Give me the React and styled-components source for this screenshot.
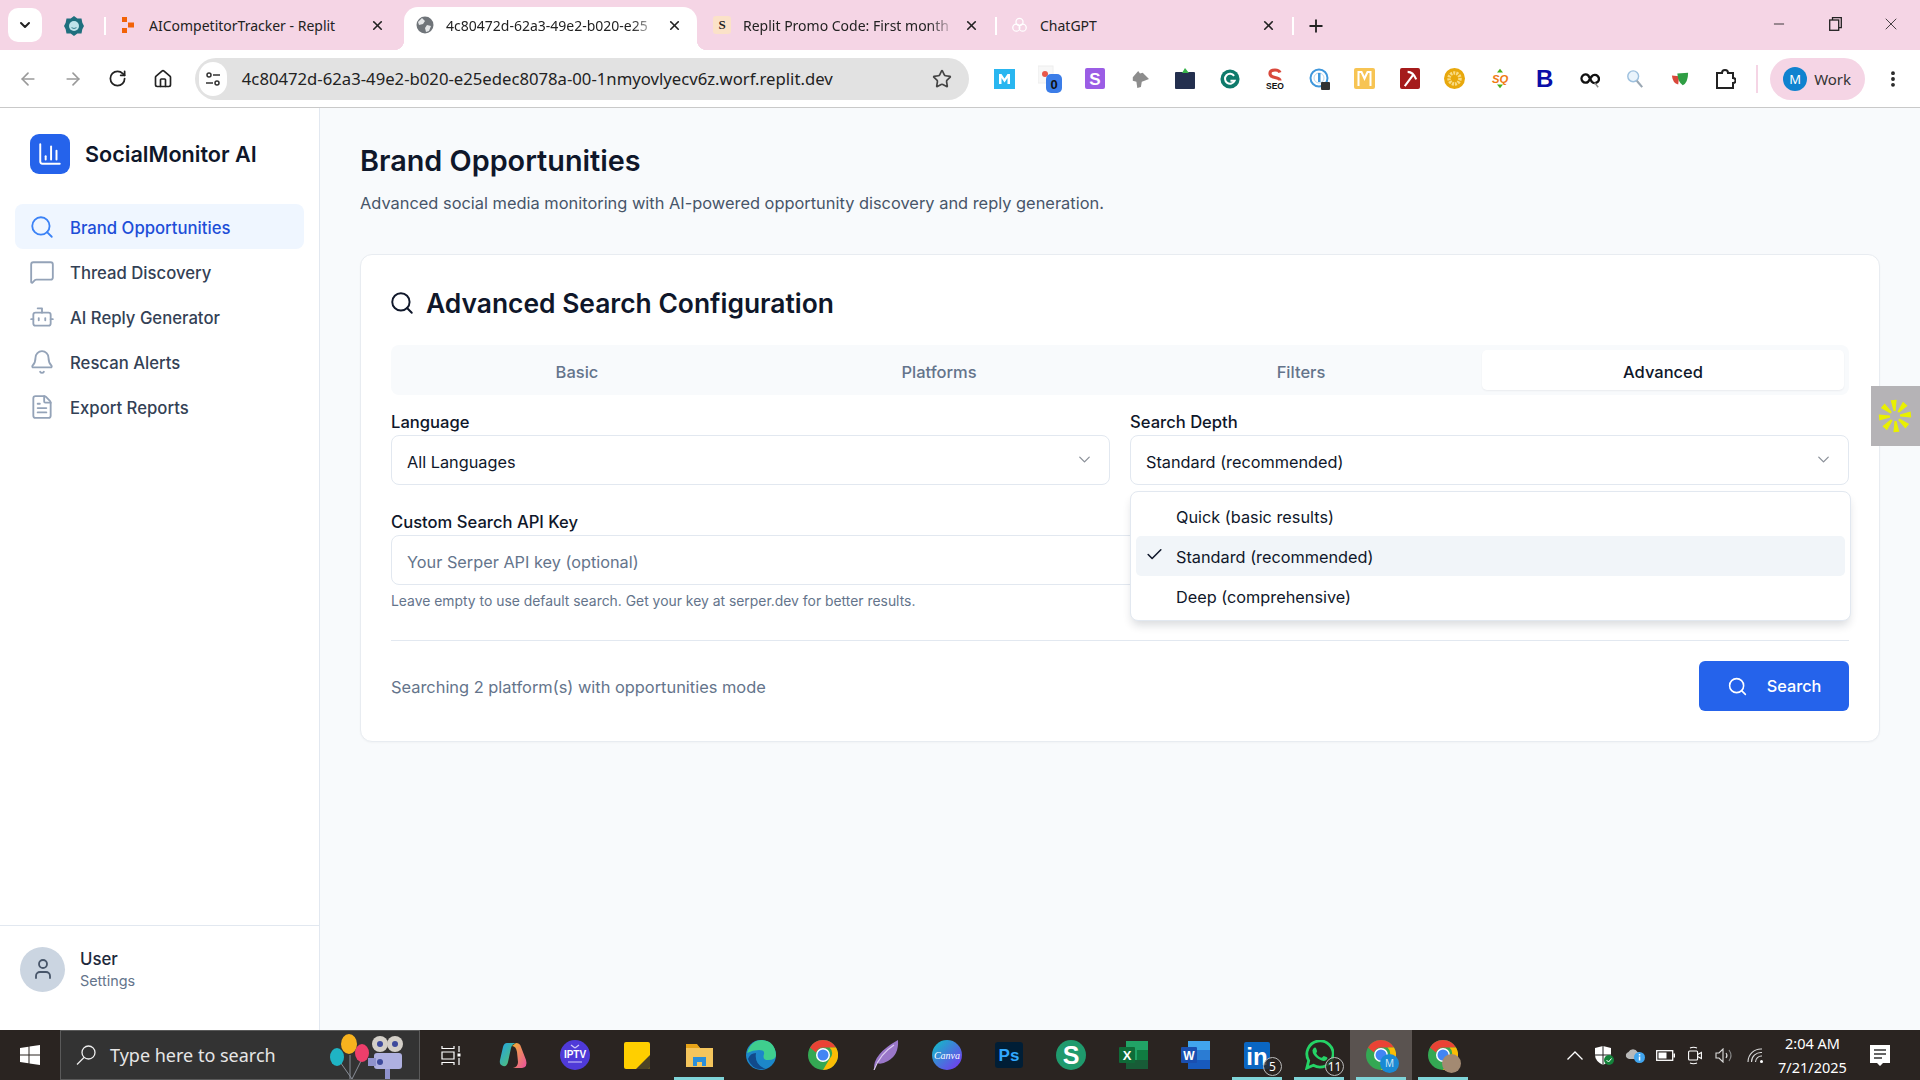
import React from 'react'
import styled, { createGlobalStyle } from 'styled-components'
import {
  ArrowLeft, ArrowRight, Bell, Bot, ChartColumn, Check, ChevronDown, FileText, Home, MessageSquare,
  Minus, MoreVertical, Plus, RotateCw, Search, Star, User, X,
} from 'lucide-react'

const GlobalStyle = createGlobalStyle`
  html, body { margin: 0; padding: 0; height: 100%; overflow: hidden; }
  body { font-family: Inter, "Liberation Sans", sans-serif; color: #0f172a; background: #fff; }
  * { box-sizing: border-box; }
`

const navItems = [
  { label: 'Brand Opportunities', Icon: Search, active: true },
  { label: 'Thread Discovery', Icon: MessageSquare },
  { label: 'AI Reply Generator', Icon: Bot },
  { label: 'Rescan Alerts', Icon: Bell },
  { label: 'Export Reports', Icon: FileText },
]

const ReplitFavicon = () => (
  <svg width="14" height="16" viewBox="0 0 14 16">
    <path d="M1 0h5v5H1zM7 5.500h6v5H7zM1 11h5v5H1z" fill="#f26207" />
  </svg>
)

const GlobeFavicon = () => (
  <svg width="18" height="18" viewBox="0 0 18 18">
    <circle cx="9" cy="9" r="8.500" fill="#6f7479" />
    <path d="M6 2l3 3-2 3-4 1-1-3zM11 9l4 1-2 5-3 1-1-4z" fill="#e4e6e8" />
  </svg>
)

const GptFavicon = () => (
  <svg width="17" height="17" viewBox="0 0 24 24" fill="none" stroke="#fff" strokeWidth="1.800">
    <circle cx="12" cy="7" r="5" />
    <circle cx="7.500" cy="15" r="5" />
    <circle cx="16.500" cy="15" r="5" />
  </svg>
)

const PinnedIcon = () => (
  <svg width="20" height="20" viewBox="0 0 24 24">
    <path d="M12 0l4 3h5l1 5 2 4-2 4-1 5h-5l-4 3-4-3H3l-1-5-2-4 2-4 1-5h5z" fill="#1f6f7e" />
    <circle cx="12" cy="12" r="6" fill="#bfe3ea" />
    <path d="M9 14q3 2 6 0" stroke="#1f6f7e" fill="none" />
  </svg>
)

const PuzzleIcon = () => (
  <svg width="22" height="22" viewBox="0 0 22 22" fill="none" stroke="#222" strokeWidth="2">
    <path d="M3 5h5a3 3 0 0 1 6 0h5v5a2.500 2.500 0 0 1 0 5v5H3z" />
  </svg>
)

const BoldExtension = () => <ExtLetter>B</ExtLetter>

const extensions = [
  <svg key="m" width="21" height="20" viewBox="0 0 21 20"><rect width="21" height="20" fill="#29b6f0" /><path d="M5 15V5h2.500L10.500 9.500 13.500 5H16v10h-2.500V9l-3 4.500L7.500 9v6z" fill="#fff" /></svg>,
  <svg key="b" width="24" height="28" viewBox="0 0 24 28"><rect x="0" y="1" width="15" height="17" fill="#f7f7f7" stroke="#eee" /><circle cx="7" cy="9" r="3" fill="#e8574a" /><rect x="8" y="9" width="16" height="19" rx="5" fill="#3b7de8" /><text x="16" y="24" fontSize="13" fontWeight="700" textAnchor="middle" fill="#111" fontFamily="Liberation Sans">0</text></svg>,
  <svg key="s" width="20" height="21" viewBox="0 0 20 21"><rect width="20" height="21" rx="2" fill="#9b5de5" /><text x="10" y="16.500" fontSize="17" fontWeight="700" textAnchor="middle" fill="#fff" fontFamily="Liberation Sans">S</text></svg>,
  <svg key="w" width="20" height="18" viewBox="0 0 22 20"><path d="M3 8l6-7 2 3 3-1 7 7-5 2-3 1-1 6-4 1-1-7-4-1z" fill="#8d8d8d" /></svg>,
  <svg key="f" width="20" height="21" viewBox="0 0 20 21"><rect x="0" y="4" width="20" height="17" rx="1" fill="#232f4e" /><path d="M7 5l3-5 4 5z" fill="#38b34a" /></svg>,
  <svg key="g" width="20" height="20" viewBox="0 0 22 22"><circle cx="11" cy="11" r="10.500" fill="#0e7a6b" /><path d="M15.500 7.500A5.500 5.500 0 1 0 16 13h-4.500" stroke="#fff" strokeWidth="2.200" fill="none" /></svg>,
  <svg key="seo" width="20" height="22" viewBox="0 0 20 22"><path d="M15 4.500Q14 2 10 2 5 2 5 5.500q0 3 5 4 5 1 5 3" fill="none" stroke="#d9483b" strokeWidth="3.200" /><text x="10" y="21" fontSize="8.500" fontWeight="700" textAnchor="middle" fill="#111" fontFamily="Liberation Sans">SEO</text></svg>,
  <svg key="lock" width="22" height="22" viewBox="0 0 22 22"><circle cx="10" cy="10" r="8.500" fill="none" stroke="#3f97dc" strokeWidth="2" /><circle cx="10" cy="10" r="5" fill="#fff" stroke="#b9d7ee" /><rect x="9" y="5" width="2.500" height="9" fill="#3f97dc" /><rect x="12" y="14" width="9" height="8" rx="1" fill="#333" /></svg>,
  <svg key="my" width="21" height="21" viewBox="0 0 21 21"><rect width="21" height="21" rx="2" fill="#f7c453" /><path d="M4.500 18V4h3l3 6.500L13.500 4h3v14" fill="none" stroke="#fff" strokeWidth="2" /></svg>,
  <svg key="pick" width="20" height="21" viewBox="0 0 21 22"><rect width="21" height="22" rx="2" fill="#a51b1b" /><path d="M5 19L14 7M8 4q6 0 9 8" stroke="#fff" strokeWidth="2.200" fill="none" /></svg>,
  <svg key="coin" width="21" height="21" viewBox="0 0 21 21"><circle cx="10.500" cy="10.500" r="10.500" fill="#e8a80c" /><circle cx="10.500" cy="10.500" r="5.500" fill="none" stroke="#f9dc84" strokeWidth="3.500" strokeDasharray="2 1" /></svg>,
  <svg key="sq" width="20" height="21" viewBox="0 0 20 28"><path d="M6 6l4-5 4 5zM6 22l4 5 4-5z" fill="#4caf1f" /><text x="10" y="20" fontSize="15" fontWeight="700" fontStyle="italic" textAnchor="middle" fill="#f07a12" fontFamily="Liberation Sans">SQ</text></svg>,
  <BoldExtension key="bold" />,
  <svg key="inf" width="20" height="20" viewBox="0 0 22 22"><path d="M9 7a4.500 4.500 0 1 0 0 7L13 8a4.500 4.500 0 1 1 0 6z" fill="none" stroke="#111" strokeWidth="2.600" /><path d="M16 15l4 5" stroke="#888" strokeWidth="1.600" /></svg>,
  <svg key="mag" width="18" height="20" viewBox="0 0 20 22"><circle cx="8" cy="8" r="6" fill="#eaf4fc" stroke="#9dc0de" strokeWidth="1.600" /><path d="M12 13l6 7" stroke="#9aa7b3" strokeWidth="2.400" /></svg>,
  <svg key="mask" width="18" height="18" viewBox="0 0 20 20"><path d="M1 6l8 1-1 9q-6-1-7-10z" fill="#d9483b" /><path d="M7 4l12-1q0 11-6 14-5-3-6-13z" fill="#2f9e44" /></svg>,
]

const ChromeLogo = () => (
  <svg width="30" height="30" viewBox="0 0 30 30">
    <circle cx="15" cy="15" r="15" fill="#34a853" />
    <path d="M15 0a15 15 0 0 1 13 7.500H15a7.500 7.500 0 0 0-7 5L2 7.500A15 15 0 0 1 15 0z" fill="#ea4335" />
    <path d="M28 7.500A15 15 0 0 1 15 30l6.500-11a7.500 7.500 0 0 0 0-11.500z" fill="#fbbc05" />
    <circle cx="15" cy="15" r="7" fill="#fff" />
    <circle cx="15" cy="15" r="5.500" fill="#4285f4" />
  </svg>
)

const BadgedChrome = ({ color, label }) => (
  <BadgeWrap>
    <ChromeLogo />
    <ProfileDot $color={color}>{label}</ProfileDot>
  </BadgeWrap>
)

const taskApps = [
  { key: 'copilot', icon: <svg width="29" height="25" viewBox="0 0 29 25"><defs><linearGradient id="cpa" x1="0" y1="0" x2="1" y2="1"><stop offset="0" stopColor="#1fa4e8" /><stop offset="1" stopColor="#5fc65a" /></linearGradient><linearGradient id="cpb" x1="0" y1="0" x2="1" y2="1"><stop offset="0" stopColor="#f2b632" /><stop offset="1" stopColor="#e94f9e" /></linearGradient></defs><path d="M8 0h9q-4 1-5 5L9 19q-1 5-5 4-4-1-3-6L4 4q1-4 4-4z" fill="url(#cpa)" /><path d="M17 0q4 0 5 4l5 13q2 7-4 8h-9q5-1 5-6l-1-10q-1-6-5-6z" fill="url(#cpb)" /></svg> },
  { key: 'iptv', icon: <svg width="30" height="30" viewBox="0 0 30 30"><circle cx="15" cy="15" r="15" fill="#4f3ad8" /><text x="15" y="18" fontSize="10" fontWeight="700" textAnchor="middle" fill="#fff" fontFamily="Liberation Sans">IPTV</text><path d="M8 22h14M15 8l-4-3M15 8l4-3" stroke="#cfc9f7" strokeWidth="1.200" /></svg> },
  { key: 'notes', icon: <svg width="26" height="27" viewBox="0 0 26 27"><rect width="26" height="27" rx="2" fill="#ffcf00" /><path d="M12 27l14-14v12q0 2-2 2z" fill="#4c4326" /></svg> },
  { key: 'explorer', running: true, icon: <svg width="27" height="23" viewBox="0 0 27 23"><path d="M0 1h11l3 3h13v19H0z" fill="#f4c55c" /><path d="M0 0h11l3 4H0z" fill="#e6a318" /><path d="M7 22V13h13v9h-4v-4h-5v4z" fill="#2a8fd9" /></svg> },
  { key: 'edge', icon: <svg width="30" height="30" viewBox="0 0 30 30"><circle cx="15" cy="15" r="15" fill="#1c87c9" /><path d="M1 13Q5 0 16 0q13 1 14 15 0 5-8 5-6 0-4-6 1-4-5-4T1 13z" fill="#3fcf8e" /><path d="M10 13q-2 12 10 16Q6 31 2 19q2-6 8-6z" fill="#114a8b" /></svg> },
  { key: 'chrome', icon: <ChromeLogo /> },
  { key: 'feather', icon: <svg width="27" height="30" viewBox="0 0 27 30"><path d="M2 29Q1 14 26 0q1 15-10 21-7 4-11 2z" fill="#9a77c9" /><path d="M2 30Q8 14 22 5" stroke="#dccdf0" strokeWidth="1.200" fill="none" /></svg> },
  { key: 'canva', icon: <svg width="30" height="30" viewBox="0 0 30 30"><defs><linearGradient id="cv" x1="0" y1="0" x2="1" y2="1"><stop offset="0" stopColor="#0cc4c4" /><stop offset="1" stopColor="#7b2ff2" /></linearGradient></defs><circle cx="15" cy="15" r="15" fill="url(#cv)" /><text x="15" y="19" fontSize="10" fontStyle="italic" textAnchor="middle" fill="#fff" fontFamily="Liberation Serif">Canva</text></svg> },
  { key: 'ps', icon: <svg width="28" height="26" viewBox="0 0 28 26"><rect width="28" height="26" rx="3" fill="#001e36" /><text x="14" y="19" fontSize="17" fontWeight="700" textAnchor="middle" fill="#31a8ff" fontFamily="Liberation Sans">Ps</text></svg> },
  { key: 'sheets', icon: <svg width="30" height="30" viewBox="0 0 30 30"><circle cx="15" cy="15" r="15" fill="#1f9a6d" /><text x="15" y="24" fontSize="25" fontWeight="700" textAnchor="middle" fill="#fff" fontFamily="Liberation Sans">S</text></svg> },
  { key: 'excel', icon: <svg width="29" height="28" viewBox="0 0 29 28"><rect x="7" y="0" width="22" height="28" fill="#21a366" /><rect x="18" y="9" width="11" height="10" fill="#107c41" /><rect x="7" y="19" width="22" height="9" fill="#185c37" /><rect x="0" y="6" width="16" height="16" rx="1" fill="#0f6b38" /><text x="8" y="18.500" fontSize="13" fontWeight="700" textAnchor="middle" fill="#fff" fontFamily="Liberation Sans">X</text></svg> },
  { key: 'word', icon: <svg width="29" height="28" viewBox="0 0 29 28"><rect x="7" y="0" width="22" height="28" fill="#2b7cd3" /><rect x="7" y="0" width="22" height="9" fill="#41a5ee" /><rect x="7" y="19" width="22" height="9" fill="#185abd" /><rect x="0" y="6" width="16" height="16" rx="1" fill="#1a4fb0" /><text x="8" y="18.500" fontSize="12" fontWeight="700" textAnchor="middle" fill="#fff" fontFamily="Liberation Sans">W</text></svg> },
  { key: 'linkedin', running: true, badge: '5', icon: <svg width="26" height="27" viewBox="0 0 26 27"><rect width="26" height="27" rx="2" fill="#0a66c2" /><text x="13" y="23" fontSize="24" fontWeight="700" textAnchor="middle" fill="#fff" fontFamily="Liberation Sans">in</text></svg> },
  { key: 'whatsapp', running: true, badge: '11', icon: <svg width="30" height="30" viewBox="0 0 32 32"><path d="M3 30l2-8A14 14 0 1 1 10 27z" fill="#2a241f" stroke="#25d366" strokeWidth="3" /><path d="M10 9q2-2 3 0l1 3-1 2q2 4 6 5l2-2 3 1q2 1 0 3-3 3-9-1-6-4-6-9z" fill="#25d366" /></svg> },
  { key: 'chrome-work', running: true, active: true, icon: <BadgedChrome color="#1a8ad4" label="M" /> },
  { key: 'chrome-other', running: true, icon: <BadgedChrome color="#a38a72" /> },
]

const App = () => {
  return (
    <>
      <GlobalStyle />
      <Screen>
        <TabStrip>
          <ScrollPill><ChevronDown size={16} strokeWidth={3} /></ScrollPill>
          <PinnedTab><PinnedIcon /></PinnedTab>
          <Tab $sep>
            <TabIcon><ReplitFavicon /></TabIcon>
            <TabTitle>AICompetitorTracker - Replit</TabTitle>
            <TabClose><X size={15} strokeWidth={2.600} /></TabClose>
          </Tab>
          <Tab $active>
            <TabIcon><GlobeFavicon /></TabIcon>
            <TabTitle $fade>4c80472d-62a3-49e2-b020-e25</TabTitle>
            <TabClose><X size={15} strokeWidth={2.600} /></TabClose>
          </Tab>
          <Tab>
            <TabIcon><SiteBadge>S</SiteBadge></TabIcon>
            <TabTitle $fade>Replit Promo Code: First month</TabTitle>
            <TabClose><X size={15} strokeWidth={2.600} /></TabClose>
          </Tab>
          <Tab $sep $sepRight>
            <TabIcon><GptFavicon /></TabIcon>
            <TabTitle>ChatGPT</TabTitle>
            <TabClose><X size={15} strokeWidth={2.600} /></TabClose>
          </Tab>
          <NewTab><Plus size={20} strokeWidth={2.200} /></NewTab>
          <WindowControls>
            <WindowButton><Minus size={16} strokeWidth={1.300} /></WindowButton>
            <WindowButton>
              <svg width="13" height="14" viewBox="0 0 13 14" fill="none" stroke="#222" strokeWidth="1.300">
                <rect x=".7" y="3" width="9" height="10.300" />
                <path d="M3.500 3V.7h8.800v10h-2.500" />
              </svg>
            </WindowButton>
            <WindowButton><X size={20} strokeWidth={1} /></WindowButton>
          </WindowControls>
        </TabStrip>

        <Toolbar>
          <NavButtons>
            <NavButton $dim><ArrowLeft size={20} /></NavButton>
            <NavButton $dim><ArrowRight size={20} /></NavButton>
            <NavButton><RotateCw size={19} strokeWidth={2.200} /></NavButton>
            <NavButton><Home size={20} /></NavButton>
          </NavButtons>
          <AddressBar>
            <SiteInfo>
              <svg width="16" height="16" viewBox="0 0 16 16" fill="none" stroke="#333" strokeWidth="1.500">
                <circle cx="4" cy="4" r="2" />
                <path d="M8 4h7M1 12h7" />
                <circle cx="12" cy="12" r="2" />
              </svg>
            </SiteInfo>
            <UrlText>4c80472d-62a3-49e2-b020-e25edec8078a-00-1nmyovlyecv6z.worf.replit.dev</UrlText>
            <Star size={20} color="#444" />
          </AddressBar>
          <Extensions>
            {extensions.map((icon) => <ExtSlot key={icon.key}>{icon}</ExtSlot>)}
            <ExtSlot><PuzzleIcon /></ExtSlot>
          </Extensions>
          <ToolbarSep />
          <ProfileChip>
            <ProfileAvatar>M</ProfileAvatar>
            Work
          </ProfileChip>
          <MenuDots><MoreVertical size={20} strokeWidth={2.600} /></MenuDots>
        </Toolbar>

        <Body>
          <Sidebar>
            <Brand>
              <BrandLogo><ChartColumn size={26} color="#fff" strokeWidth={1.800} /></BrandLogo>
              <BrandName>SocialMonitor AI</BrandName>
            </Brand>
            <Nav>
              {navItems.map(({ label, Icon, active }) => (
                <NavItem key={label} $active={active}>
                  <Icon size={26} strokeWidth={1.700} />
                  {label}
                </NavItem>
              ))}
            </Nav>
            <UserRow>
              <Avatar><User size={24} strokeWidth={1.800} /></Avatar>
              <div>
                <UserName>User</UserName>
                <UserLink>Settings</UserLink>
              </div>
            </UserRow>
          </Sidebar>

          <Main>
            <PageTitle>Brand Opportunities</PageTitle>
            <PageSub>Advanced social media monitoring with AI-powered opportunity discovery and reply generation.</PageSub>
            <Card>
              <CardTitle>
                <Search size={26} strokeWidth={1.800} />
                Advanced Search Configuration
              </CardTitle>
              <TabsList>
                <TabTrigger>Basic</TabTrigger>
                <TabTrigger>Platforms</TabTrigger>
                <TabTrigger>Filters</TabTrigger>
                <TabTrigger $active>Advanced</TabTrigger>
              </TabsList>
              <FormGrid>
                <Field>
                  <Label>Language</Label>
                  <SelectBox>
                    All Languages
                    <ChevronDown size={19} color="#8a8f98" strokeWidth={1.600} />
                  </SelectBox>
                </Field>
                <Field>
                  <Label>Search Depth</Label>
                  <SelectBox>
                    Standard (recommended)
                    <ChevronDown size={19} color="#8a8f98" strokeWidth={1.600} />
                  </SelectBox>
                  <Menu>
                    <MenuItem>Quick (basic results)</MenuItem>
                    <MenuItem $selected>
                      <MenuCheck><Check size={19} strokeWidth={2} /></MenuCheck>
                      Standard (recommended)
                    </MenuItem>
                    <MenuItem>Deep (comprehensive)</MenuItem>
                  </Menu>
                </Field>
                <WideField>
                  <Label>Custom Search API Key</Label>
                  <KeyInput readOnly placeholder="Your Serper API key (optional)" />
                  <Help>Leave empty to use default search. Get your key at serper.dev for better results.</Help>
                </WideField>
              </FormGrid>
              <CardFooter>
                <FooterText>Searching 2 platform(s) with opportunities mode</FooterText>
                <SearchButton>
                  <Search size={21} strokeWidth={1.800} />
                  Search
                </SearchButton>
              </CardFooter>
            </Card>
          </Main>
          <FloatTab>
            <svg width="34" height="34" viewBox="0 0 34 34" fill="#e9f000">
              {[0, 45, 90, 135, 180, 225, 270, 315].map((a) => (
                <polygon key={a} points="16,12 18,12 20,1 14,1" transform={`rotate(${a - 5} 17 17)`} />
              ))}
            </svg>
          </FloatTab>
        </Body>

        <Taskbar>
          <StartButton>
            <svg width="20" height="20" viewBox="0 0 20 20" fill="#fff">
              <path d="M0 3l8.500-1.200V9.500H0zM9.500 1.600L20 0v9.500H9.500zM0 10.500h8.500v7.700L0 17zM9.500 10.500H20V20L9.500 18.400z" />
            </svg>
          </StartButton>
          <TaskSearch>
            <svg width="20" height="20" viewBox="0 0 20 20" fill="none" stroke="#eee" strokeWidth="1.300">
              <circle cx="12.500" cy="7.500" r="6.500" />
              <path d="M8 12.500L1 19.500" />
            </svg>
            <SearchHint>Type here to search</SearchHint>
            <svg width="82" height="48" viewBox="0 0 82 48">
              <path d="M8 28l14 20M20 24v24M32 28l-10 20" stroke="#8a8f98" />
              <ellipse cx="7" cy="26" rx="7" ry="9" fill="#1fb4c4" />
              <ellipse cx="19" cy="13" rx="8" ry="10" fill="#f7b21e" />
              <ellipse cx="32" cy="22" rx="7" ry="9" fill="#ee3e6b" />
              <circle cx="50" cy="13" r="8" fill="#d3cfc8" />
              <circle cx="65" cy="13" r="8" fill="#d3cfc8" />
              <circle cx="50" cy="13" r="3" fill="#3d4a9c" />
              <circle cx="65" cy="13" r="3" fill="#3d4a9c" />
              <rect x="44" y="22" width="28" height="16" rx="3" fill="#aeb0e0" />
              <rect x="38" y="27" width="8" height="8" fill="#8f92cc" />
              <circle cx="50" cy="31" r="3" fill="#3d4a9c" />
              <rect x="55" y="38" width="5" height="10" fill="#8f92cc" />
            </svg>
          </TaskSearch>
          <TaskSlot>
            <svg width="20" height="19" viewBox="0 0 20 19" fill="none" stroke="#fff" strokeWidth="1.200">
              <path d="M1 3V0M13 3V0M1 6h12v7H1zM1 16v3M13 16v3M1 2.500h12M1 16.500h12M18 0v6M18 12v7" />
              <rect x="16.500" y="7.500" width="3" height="3" fill="#fff" stroke="none" />
            </svg>
          </TaskSlot>
          {taskApps.map((app) => (
            <TaskSlot key={app.key} $running={app.running} $active={app.active}>
              {app.icon}
              {app.badge && <CountBadge>{app.badge}</CountBadge>}
            </TaskSlot>
          ))}
          <Tray>
            <TrayIcon>
              <svg width="16" height="9" viewBox="0 0 16 9" fill="none" stroke="#fff" strokeWidth="1.300"><path d="M.5 8.500L8 1l7.500 7.500" /></svg>
            </TrayIcon>
            <TrayIcon>
              <svg width="20" height="19" viewBox="0 0 20 19"><path d="M8 0l8 2v7q0 6-8 10-8-4-8-10V2z" fill="#fff" /><path d="M8 0v19M0 9h16" stroke="#222" /><circle cx="14" cy="14" r="5" fill="#14833b" /><path d="M11.500 14l2 2 3-3.500" stroke="#fff" fill="none" /></svg>
            </TrayIcon>
            <TrayIcon>
              <svg width="20" height="16" viewBox="0 0 20 16"><path d="M2 11a3.500 3.500 0 0 1 1.500-6 5 5 0 0 1 9 0 3.500 3.500 0 0 1 0 7H4z" fill="#b9b9b9" /><circle cx="14.500" cy="10.500" r="5.500" fill="#41a5ee" /><rect x="13.800" y="9.500" width="1.500" height="4" fill="#fff" /><rect x="13.800" y="7" width="1.500" height="1.500" fill="#fff" /></svg>
            </TrayIcon>
            <TrayIcon>
              <svg width="19" height="11" viewBox="0 0 19 11"><rect x=".7" y=".7" width="16" height="9.600" fill="none" stroke="#fff" strokeWidth="1.300" /><rect x="2.500" y="2.500" width="8" height="6" fill="#fff" /><rect x="17.500" y="3.500" width="1.500" height="4" fill="#fff" /></svg>
            </TrayIcon>
            <TrayIcon>
              <svg width="14" height="19" viewBox="0 0 14 19" fill="none" stroke="#fff" strokeWidth="1.100"><rect x=".6" y="5" width="9" height="9" rx="1" /><path d="M9.600 8.500l3.800-2v6l-3.800-2M2 2q3.500-1.500 7 0M2 17q3.500 1.500 7 0" /></svg>
            </TrayIcon>
            <TrayIcon>
              <svg width="20" height="15" viewBox="0 0 20 15" fill="none" stroke="#ddd" strokeWidth="1.100"><path d="M1 5h3l4-4v13l-4-4H1z" /><path d="M11 5q2 2.500 0 5" /><path d="M14 2q4 5.500 0 11" stroke="#888" /></svg>
            </TrayIcon>
            <TrayIcon>
              <svg width="16" height="15" viewBox="0 0 16 15" fill="none" stroke="#ddd" strokeWidth="1.100"><path d="M1 14a13 13 0 0 1 14-13M4.500 14a9.500 9.500 0 0 1 10.500-9.500M8.500 14a6 6 0 0 1 6.500-6" /><circle cx="14.500" cy="13.500" r="1.500" fill="#fff" stroke="none" /></svg>
            </TrayIcon>
          </Tray>
          <Clock>
            <span>2:04 AM</span>
            <span>7/21/2025</span>
          </Clock>
          <NotifySlot>
            <svg width="20" height="21" viewBox="0 0 20 21"><path d="M0 0h20v18h-7l-3 3-3-3H0z" fill="#fff" /><path d="M4 5h12M4 9h12M4 13h8" stroke="#333" strokeWidth="1.300" /></svg>
          </NotifySlot>
        </Taskbar>
      </Screen>
    </>
  )
}

export default App

// Browser chrome
const Screen = styled.div`
  width: 1920px;
  height: 1080px;
  display: flex;
  flex-direction: column;
  overflow: hidden;
`

const TabStrip = styled.div`
  height: 50px;
  flex: none;
  display: flex;
  align-items: flex-end;
  background: #f5d5e5;
  font-family: "Noto Sans", "Open Sans", sans-serif;
  color: #222;
`

const ScrollPill = styled.div`
  width: 34px;
  height: 34px;
  margin: 0 0 8px 8px;
  border-radius: 10px;
  background: #fff;
  display: flex;
  align-items: center;
  justify-content: center;
`

const PinnedTab = styled.div`
  width: 63px;
  height: 42px;
  display: flex;
  align-items: center;
  justify-content: center;
  padding-bottom: 6px;
`

const Tab = styled.div`
  position: relative;
  flex: none;
  width: ${(p) => (p.$active ? '293px' : '297px')};
  height: 43px;
  margin: 0 ${(p) => (p.$active ? '2px' : '0')};
  padding: 0 0 7px ${(p) => (p.$active ? '12px' : '14px')};
  display: flex;
  align-items: center;
  border-radius: 14px 14px 0 0;
  background: ${(p) => (p.$active ? '#fff' : 'transparent')};

  &::before {
    content: ${(p) => (p.$sep || p.$active ? "''" : 'none')};
    position: absolute;
    left: ${(p) => (p.$active ? '-10px' : '-1px')};
    top: ${(p) => (p.$active ? '33px' : '10px')};
    width: ${(p) => (p.$active ? '10px' : '2px')};
    height: ${(p) => (p.$active ? '10px' : '18px')};
    background: ${(p) => (p.$active ? 'radial-gradient(circle at 0 0, transparent 10px, #fff 10.500px)' : '#fff')};
  }

  &::after {
    content: ${(p) => (p.$sepRight || p.$active ? "''" : 'none')};
    position: absolute;
    right: ${(p) => (p.$active ? '-10px' : '-1px')};
    top: ${(p) => (p.$active ? '33px' : '10px')};
    width: ${(p) => (p.$active ? '10px' : '2px')};
    height: ${(p) => (p.$active ? '10px' : '18px')};
    background: ${(p) => (p.$active ? 'radial-gradient(circle at 100% 0, transparent 10px, #fff 10.500px)' : '#fff')};
  }
`

const TabIcon = styled.span`
  width: 18px;
  display: flex;
  justify-content: center;
  flex: none;
  margin-right: 12px;
`

const SiteBadge = styled.span`
  width: 18px;
  height: 18px;
  border-radius: 3px;
  background: #fbe2c8;
  color: #222;
  font: 700 13px/18px "Liberation Serif", serif;
  text-align: center;
`

const TabTitle = styled.span`
  width: 219px;
  font-size: 14px;
  white-space: nowrap;
  overflow: hidden;
  ${(p) => p.$fade && 'mask-image: linear-gradient(to right, #000 85%, transparent 97%);'}
`

const TabClose = styled.span`
  display: flex;
  margin-left: 2px;
`

const NewTab = styled.div`
  width: 46px;
  height: 42px;
  padding-bottom: 7px;
  display: flex;
  align-items: center;
  justify-content: center;
`

const WindowControls = styled.div`
  margin-left: auto;
  margin-right: 1px;
  display: flex;
  height: 50px;
`

const WindowButton = styled.div`
  width: 56px;
  display: flex;
  align-items: center;
  justify-content: center;
  padding-bottom: 2px;
`

const Toolbar = styled.div`
  height: 58px;
  flex: none;
  display: flex;
  align-items: center;
  background: #fff;
  border-bottom: 1px solid #c9c9c9;
  border-radius: 10px 10px 0 0;
  font-family: "Noto Sans", "Open Sans", sans-serif;
`

const NavButtons = styled.div`
  width: 195px;
  padding-left: 5px;
  display: flex;
`

const NavButton = styled.div`
  width: 45px;
  display: flex;
  justify-content: center;
  color: ${(p) => (p.$dim ? '#9a9a9a' : '#222')};
`

const AddressBar = styled.div`
  width: 775px;
  height: 42px;
  border-radius: 21px;
  background: #e2e2e2;
  display: flex;
  align-items: center;
  padding: 0 17px 0 4px;
`

const SiteInfo = styled.div`
  width: 28px;
  height: 34px;
  border-radius: 17px;
  background: #fff;
  display: flex;
  align-items: center;
  justify-content: center;
  margin-right: 15px;
`

const UrlText = styled.div`
  flex: 1;
  font-size: 16.700px;
  color: #222;
  white-space: nowrap;
`

const Extensions = styled.div`
  margin-left: 13px;
  display: flex;
`

const ExtSlot = styled.div`
  width: 45px;
  display: flex;
  justify-content: center;
  align-items: center;
`

const ExtLetter = styled.span`
  font: 700 24px/24px "Liberation Sans", sans-serif;
  color: #0a0ea8;
`

const ToolbarSep = styled.div`
  width: 2px;
  height: 28px;
  margin: 0 12px 0 9px;
  background: #f5d5e5;
`

const ProfileChip = styled.div`
  width: 95px;
  height: 42px;
  border-radius: 21px;
  background: #f5d5e5;
  display: flex;
  align-items: center;
  gap: 7px;
  padding-left: 13px;
  font-size: 15px;
  color: #333;
`

const ProfileAvatar = styled.span`
  width: 24px;
  height: 24px;
  border-radius: 50%;
  background: #0f82cf;
  color: #fff;
  font-size: 13px;
  text-align: center;
  line-height: 24px;
`

const MenuDots = styled.div`
  width: 55px;
  display: flex;
  justify-content: center;
  color: #222;
`

// App layout
const Body = styled.div`
  position: relative;
  flex: 1;
  min-height: 0;
  display: flex;
  background: #f8fafc;
`

const Sidebar = styled.aside`
  width: 320px;
  flex: none;
  display: flex;
  flex-direction: column;
  background: #fff;
  border-right: 1px solid #e2e8f0;
`

const Brand = styled.div`
  height: 92px;
  margin-bottom: 4px;
  padding: 0 30px;
  display: flex;
  align-items: center;
  gap: 15px;
`

const BrandLogo = styled.div`
  width: 40px;
  height: 40px;
  border-radius: 9px;
  background: #2563eb;
  display: flex;
  align-items: center;
  justify-content: center;
`

const BrandName = styled.div`
  font-size: 21.600px;
  font-weight: 600;
  color: #0f172a;
  white-space: nowrap;
`

const Nav = styled.nav`
  flex: 1;
  padding: 0 15px;
  display: flex;
  flex-direction: column;
`

const NavItem = styled.div`
  height: 45px;
  padding: 2px 14px 0;
  display: flex;
  align-items: center;
  gap: 15px;
  border-radius: 8px;
  font-size: 16.700px;
  font-weight: 500;
  background: ${(p) => (p.$active ? '#eff6ff' : 'transparent')};
  color: ${(p) => (p.$active ? '#1d4ed8' : '#334155')};

  svg {
    flex: none;
    margin-top: -2px;
    color: ${(p) => (p.$active ? '#3b82f6' : '#94a3b8')};
  }
`

const UserRow = styled.div`
  height: 105px;
  flex: none;
  padding: 0 20px 18px;
  display: flex;
  align-items: center;
  gap: 15px;
  border-top: 1px solid #e2e8f0;
`

const Avatar = styled.div`
  width: 45px;
  height: 45px;
  border-radius: 50%;
  background: #cbd5e1;
  color: #475569;
  display: flex;
  align-items: center;
  justify-content: center;
`

const UserName = styled.div`
  font-size: 16.800px;
  font-weight: 500;
  color: #1e293b;
  line-height: 24px;
`

const UserLink = styled.div`
  font-size: 14.400px;
  color: #64748b;
  line-height: 20px;
`

const Main = styled.main`
  flex: 1;
  min-width: 0;
  padding: 35px 40px 0;
`

const PageTitle = styled.h1`
  margin: 0;
  font-size: 28.800px;
  font-weight: 600;
  line-height: 36px;
  color: #0f172a;
`

const PageSub = styled.p`
  margin: 12px 0 0;
  font-size: 16.400px;
  line-height: 24px;
  color: #475569;
`

const Card = styled.section`
  margin-top: 39px;
  height: 488px;
  padding: 31px 30px 30px;
  background: #fff;
  border: 1px solid #e8ecf1;
  border-radius: 12px;
  box-shadow: 0 1px 2px rgba(15, 23, 42, 0.03);
`

const CardTitle = styled.h2`
  margin: 0;
  height: 33px;
  display: flex;
  align-items: center;
  gap: 11px;
  font-size: 26.400px;
  font-weight: 600;
  color: #0f172a;

  svg { margin-left: -2px; }
`

const TabsList = styled.div`
  margin-top: 26px;
  height: 50px;
  padding: 5px;
  display: grid;
  grid-template-columns: repeat(4, 1fr);
  background: #f8fafc;
  border-radius: 8px;
`

const TabTrigger = styled.div`
  padding-top: 3px;
  display: flex;
  align-items: center;
  justify-content: center;
  border-radius: 5px;
  font-size: 16.500px;
  font-weight: 500;
  background: ${(p) => (p.$active ? '#fff' : 'transparent')};
  color: ${(p) => (p.$active ? '#0f172a' : '#64748b')};
  box-shadow: ${(p) => (p.$active ? '0 1px 2px rgba(15, 23, 42, 0.06)' : 'none')};
`

const FormGrid = styled.div`
  margin-top: 15px;
  display: grid;
  grid-template-columns: 1fr 1fr;
  column-gap: 20px;
  row-gap: 25px;
`

const Field = styled.div`
  position: relative;
`

const WideField = styled.div`
  grid-column: 1 / -1;
`

const Label = styled.div`
  height: 25px;
  font-size: 16.600px;
  font-weight: 500;
  line-height: 24px;
  color: #0f172a;
`

const SelectBox = styled.div`
  height: 50px;
  padding: 3px 15px 0;
  display: flex;
  align-items: center;
  justify-content: space-between;
  border: 1px solid #e2e8f0;
  border-radius: 8px;
  font-size: 16.300px;
  color: #0f172a;

  svg { margin-top: -4px; }
`

const Menu = styled.div`
  position: absolute;
  z-index: 5;
  top: 81px;
  left: 0;
  right: -2px;
  height: 130px;
  padding: 4px 5px;
  background: #fff;
  border: 1px solid #e2e8f0;
  border-radius: 8px;
  box-shadow: 0 6px 10px -2px rgba(15, 23, 42, 0.16);
`

const MenuItem = styled.div`
  position: relative;
  height: 40px;
  padding: 2px 0 0 40px;
  display: flex;
  align-items: center;
  border-radius: 5px;
  font-size: 16.300px;
  color: #0f172a;
  background: ${(p) => (p.$selected ? '#f1f5f9' : 'transparent')};
`

const MenuCheck = styled.span`
  position: absolute;
  left: 9px;
  top: 9px;
  display: flex;
`

const KeyInput = styled.input`
  display: block;
  width: 100%;
  height: 50px;
  padding: 3px 15px 0;
  border: 1px solid #e2e8f0;
  border-radius: 8px;
  outline: none;
  font: 400 16.300px Inter, sans-serif;

  &::placeholder { color: #64748b; opacity: 1; }
`

const Help = styled.div`
  margin-top: 6px;
  font-size: 13.900px;
  line-height: 20px;
  color: #64748b;
`

const CardFooter = styled.div`
  margin-top: 29px;
  padding-top: 20px;
  border-top: 1px solid #e2e8f0;
  display: flex;
  align-items: center;
  justify-content: space-between;
`

const FooterText = styled.div`
  padding-top: 2px;
  font-size: 16.400px;
  color: #64748b;
`

const SearchButton = styled.button`
  width: 150px;
  height: 50px;
  border: none;
  border-radius: 6px;
  background: #2563eb;
  color: #fff;
  display: flex;
  align-items: center;
  justify-content: center;
  gap: 19px;
  font: 500 16.300px Inter, sans-serif;
`

const FloatTab = styled.div`
  position: absolute;
  right: 0;
  top: 278px;
  width: 49px;
  height: 60px;
  padding-right: 1px;
  background: #b5b3b6;
  display: flex;
  align-items: center;
  justify-content: center;
`

// Windows taskbar
const Taskbar = styled.footer`
  height: 50px;
  flex: none;
  display: flex;
  background: #2a2421;
  color: #fff;
  font-family: "Noto Sans", "Open Sans", sans-serif;
`

const StartButton = styled.div`
  flex: none;
  width: 60px;
  display: flex;
  align-items: center;
  justify-content: center;
`

const TaskSearch = styled.div`
  flex: none;
  width: 360px;
  padding-left: 15px;
  display: flex;
  align-items: center;
  background: #333;
  border: 1px solid #5a5a5a;
`

const SearchHint = styled.span`
  width: 220px;
  margin-left: 14px;
  font-size: 18px;
  color: #e6e6e6;
  white-space: nowrap;
`

const TaskSlot = styled.div`
  position: relative;
  flex: none;
  width: 62px;
  display: flex;
  align-items: center;
  justify-content: center;
  background: ${(p) => (p.$active ? '#5a5350' : 'transparent')};

  &::after {
    content: ${(p) => (p.$running ? "''" : 'none')};
    position: absolute;
    left: 6px;
    right: 6px;
    bottom: 0;
    height: 3px;
    background: #7fd4d8;
  }
`

const BadgeWrap = styled.div`
  position: relative;
  display: flex;
`

const ProfileDot = styled.span`
  position: absolute;
  right: -3px;
  bottom: -3px;
  width: 19px;
  height: 19px;
  border-radius: 50%;
  background: ${(p) => p.$color};
  color: #cde6f7;
  font-size: 10px;
  line-height: 19px;
  text-align: center;
`

const CountBadge = styled.span`
  position: absolute;
  right: 6px;
  bottom: 4px;
  width: 19px;
  height: 19px;
  border-radius: 50%;
  border: 1px solid #bbb;
  background: rgba(42, 36, 33, 0.8);
  color: #fff;
  font-size: 12px;
  line-height: 17px;
  text-align: center;
`

const Tray = styled.div`
  margin-left: auto;
  display: flex;
  align-items: center;
`

const TrayIcon = styled.div`
  width: 30px;
  display: flex;
  justify-content: center;
`

const Clock = styled.div`
  flex: none;
  width: 85px;
  display: flex;
  flex-direction: column;
  align-items: center;
  justify-content: center;
  gap: 4px;
  font-size: 14.500px;
  line-height: 20px;
`

const NotifySlot = styled.div`
  flex: none;
  width: 50px;
  margin-right: 15px;
  display: flex;
  align-items: center;
  justify-content: center;
`
